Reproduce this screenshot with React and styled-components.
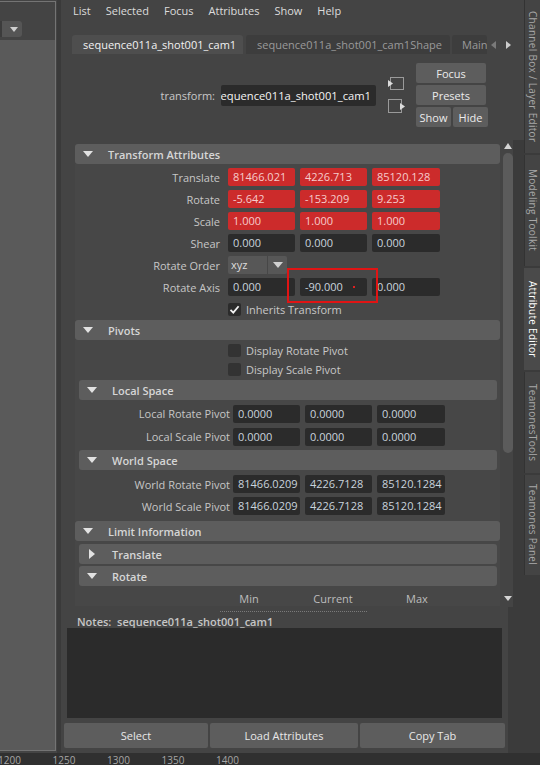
import React from "react"
import styled, { createGlobalStyle } from "styled-components"

const GlobalStyle = createGlobalStyle`
  html, body {
    margin: 0;
    padding: 0;
    background: #444444;
  }
  body {
    font-family: "Open Sans", "Noto Sans", sans-serif;
    font-size: 11px;
    color: #c8c8c8;
  }
  * { box-sizing: border-box; }
`

const Page = styled.div`
  width: 540px;
  height: 765px;
  overflow: hidden;
  display: grid;
  grid-template-columns: 56px 6px 462px 16px;
  grid-template-rows: 753px 12px;
  background: #444444;
`

/* ---------- left pane ---------- */

const LeftPane = styled.div`
  margin-top: 1px;
  height: 750px;
  display: flex;
  flex-direction: column;
  border: 1px solid #747474;
  border-left: none;
`

const LeftTop = styled.div`
  height: 38px;
  padding-top: 19px;
  background: #444444;
`

const DropButton = styled.div`
  width: 22px;
  height: 16px;
  display: flex;
  align-items: center;
  justify-content: center;
  padding-left: 3px;
  background: #555555;
  border-left: 2px solid #3c3c3c;
  border-radius: 0 3px 3px 0;
`

const LeftBody = styled.div`
  flex: 1;
  background: #5a5a5a;
`

const Gutter = styled.div`
  background: #3a3a3a;
  border-left: 1px solid #444444;
  border-right: 1px solid #444444;
`

/* ---------- main column ---------- */

const Main = styled.div`
  display: flex;
  flex-direction: column;
  background: #3b3b3b;
  min-width: 0;
`

const MenuBar = styled.div`
  height: 20px;
  display: flex;
  align-items: center;
  gap: 15px;
  padding-left: 11px;
  background: #444444;
  color: #dcdcdc;
`

const TopGap = styled.div`
  height: 15px;
  background: #444444;
`

const TabBar = styled.div`
  height: 19px;
  display: flex;
  padding-left: 10px;
  background: #444444;
`

const Tab = styled.div`
  width: ${p => p.$w}px;
  flex: none;
  margin-right: ${p => p.$mr ?? 3}px;
  padding-left: ${p => p.$pl ?? 11}px;
  line-height: 19px;
  white-space: nowrap;
  overflow: hidden;
  border-radius: 3px 3px 0 0;
  background: ${p => (p.$active ? "#4e4e4e" : "#3d3d3d")};
  color: ${p => (p.$active ? "#f2f2f2" : "#9a9a9a")};
`

const TabArrows = styled.div`
  display: flex;
  align-items: center;
  gap: 10px;
  padding-left: 4px;
`

const TriLeft = styled.span`
  width: 0;
  height: 0;
  border-top: 4px solid transparent;
  border-bottom: 4px solid transparent;
  border-right: 5px solid ${p => p.$c || "#7a7a7a"};
`

const TriRight = styled.span`
  width: 0;
  height: 0;
  border-top: ${p => p.$s || 4}px solid transparent;
  border-bottom: ${p => p.$s || 4}px solid transparent;
  border-left: ${p => (p.$s || 4) + 1}px solid ${p => p.$c || "#cccccc"};
`

const TriDown = styled.span`
  width: 0;
  height: 0;
  border-left: ${p => p.$s || 5}px solid transparent;
  border-right: ${p => p.$s || 5}px solid transparent;
  border-top: ${p => (p.$s || 5) + 1}px solid ${p => p.$c || "#e2e2e2"};
`

const TriUp = styled.span`
  width: 0;
  height: 0;
  border-left: 4px solid transparent;
  border-right: 4px solid transparent;
  border-bottom: 6px solid #d4d4d4;
`

const HeaderArea = styled.div`
  height: 86px;
  display: flex;
  align-items: center;
  justify-content: flex-end;
  padding: 0 36px 4px 0;
  background: #444444;
`

const FieldLabel = styled.div`
  margin-right: 6px;
  color: #c8c8c8;
`

const NameInput = styled.div`
  width: 155px;
  height: 21px;
  display: flex;
  align-items: center;
  justify-content: flex-end;
  padding-right: 5px;
  overflow: hidden;
  white-space: nowrap;
  border-radius: 2px;
  background: #2b2b2b;
  color: #f4f4f4;
  font-size: 11.2px;
`

const IconStack = styled.div`
  width: 17px;
  margin-left: 12px;
  display: flex;
  flex-direction: column;
  gap: 8px;
`

const ButtonStack = styled.div`
  width: 72px;
  margin-left: 11px;
  display: flex;
  flex-direction: column;
  gap: 2px;
`

const ButtonPair = styled.div`
  display: flex;
  gap: 2px;
`

const SmallButton = styled.div`
  width: ${p => p.$w}px;
  height: 20px;
  display: flex;
  align-items: center;
  justify-content: center;
  border-radius: 2px;
  background: #5d5d5d;
  color: #ececec;
`

/* ---------- scroll area ---------- */

const ScrollArea = styled.div`
  height: 467px;
  display: flex;
  overflow: hidden;
`

const Sections = styled.div`
  flex: 1;
  display: flex;
  flex-direction: column;
  padding: 4px 2px 0 13px;
  background: #444444;
  overflow: hidden;
`

const ScrollTrack = styled.div`
  width: 11px;
  display: flex;
  flex-direction: column;
  align-items: center;
  background: #444444;
`

const ScrollUp = styled(TriUp)`
  margin-top: 3px;
`

const ScrollThumb = styled.div`
  margin-top: 4px;
  width: 10px;
  height: 300px;
  border-radius: 5px;
  background: #5b5b5b;
`

const ScrollDown = styled(TriDown)`
  margin-top: auto;
  margin-bottom: 6px;
`

const ScrollGutter = styled.div`
  width: 11px;
  background: #3b3b3b;
`

const SectionWrap = styled.div`
  display: flex;
  flex-direction: column;
  flex: none;
  margin: ${p => p.$mt || 0}px ${p => (p.$nested ? 3 : 0)}px 0 ${p => (p.$nested ? 4 : 0)}px;
`

const SectionHeader = styled.div`
  height: 20px;
  display: flex;
  align-items: center;
  padding-left: 7px;
  border-radius: 3px;
  background: #5d5d5d;
  color: #d6d6d6;
  font-weight: 600;
`

const ArrowBox = styled.span`
  width: 11px;
  margin-right: 15px;
  display: flex;
  align-items: center;
  justify-content: center;
`

const SectionBody = styled.div`
  display: flex;
  flex-direction: column;
  padding: ${p => p.$pt || 0}px 0 ${p => p.$pb || 0}px;
  background: ${p => (p.$nested ? "transparent" : "#474747")};
`

const Row = styled.div`
  position: relative;
  display: flex;
  align-items: center;
  height: ${p => p.$h || 22}px;
`

const Label = styled.div`
  width: ${p => p.$w}px;
  margin-right: ${p => p.$gap}px;
  flex: none;
  text-align: right;
  white-space: nowrap;
  color: #c6c6c6;
`

const Fields = styled.div`
  display: flex;
  gap: 5px;
`

const Field = styled.div`
  position: relative;
  width: ${p => p.$w || 67}px;
  height: 18px;
  line-height: 18px;
  padding-left: 5px;
  overflow: hidden;
  white-space: nowrap;
  border-radius: 2px;
  background: ${p => (p.$keyed ? "#cc2b2b" : "#2b2b2b")};
  color: ${p => (p.$keyed ? "#f6cccc" : "#c9d3dd")};
`

const RedDot = styled.span`
  position: absolute;
  left: 53px;
  top: 8px;
  width: 2px;
  height: 2px;
  background: #e02020;
`

const Annotation = styled.div`
  position: absolute;
  left: 212px;
  top: -8px;
  width: 91px;
  height: 35px;
  border: 2px solid #e01414;
  pointer-events: none;
`

const Dropdown = styled.div`
  width: 59px;
  height: 18px;
  display: flex;
  gap: 1px;
  border-radius: 2px;
  overflow: hidden;
`

const DropValue = styled.div`
  flex: 1;
  padding-left: 3px;
  line-height: 18px;
  background: #575757;
  color: #dddddd;
`

const DropArrow = styled.div`
  width: 19px;
  display: flex;
  align-items: center;
  justify-content: center;
  background: #575757;
`

const CheckBox = styled.div`
  width: 13px;
  height: 13px;
  margin-right: 5px;
  display: flex;
  align-items: center;
  justify-content: center;
  border-radius: 2px;
  background: ${p => (p.$checked ? "#2b2b2b" : "#333333")};
`

const CheckText = styled.span`
  color: #c8c8c8;
`

const LimitHead = styled.div`
  height: 16px;
  display: grid;
  grid-template-columns: 84px 84px 84px;
  padding-left: 128px;
  align-items: center;
  color: #bdbdbd;
  text-align: center;
`

/* ---------- notes ---------- */

const NotesPanel = styled.div`
  flex: 1;
  margin-right: 16px;
  display: flex;
  flex-direction: column;
  background: #444444;
`

const SplitHandle = styled.div`
  width: 147px;
  height: 0;
  margin: 4px 0 3px 158px;
  border-top: 1px dotted #7a7a7a;
`

const NotesLabel = styled.div`
  height: 13px;
  line-height: 13px;
  padding-left: 15px;
  white-space: pre;
  font-weight: 600;
  color: #c6c6c6;
`

const NotesBox = styled.div`
  height: 90px;
  margin: 0 6px 0 5px;
  background: #2b2b2b;
`

const ButtonRow = styled.div`
  height: 25px;
  margin: 5px 3px 0 2px;
  display: grid;
  grid-template-columns: 144px 148px 1fr;
  gap: 2px;
`

const BigButton = styled.div`
  display: flex;
  align-items: center;
  justify-content: center;
  border-radius: 2px;
  background: #5d5d5d;
  color: #e8e8e8;
`

/* ---------- right sidebar ---------- */

const Sidebar = styled.div`
  display: flex;
  flex-direction: column;
  gap: 2px;
  background: #3b3b3b;
`

const SideTab = styled.div`
  height: ${p => p.$h}px;
  flex: none;
  display: flex;
  align-items: center;
  justify-content: center;
  writing-mode: vertical-rl;
  white-space: nowrap;
  font-size: 10px;
  letter-spacing: 0.3px;
  border-left: 1px solid ${p => (p.$active ? "#4a4a4a" : "#333333")};
  background: ${p => (p.$active ? "#4a4a4a" : "#444444")};
  color: ${p => (p.$active ? "#ffffff" : "#a8a8a8")};
`

/* ---------- timeline ---------- */

const Timeline = styled.div`
  grid-column: 1 / -1;
  display: flex;
  padding-top: 2px;
  margin-left: -2px;
  background: #303030;
  overflow: hidden;
`

const Tick = styled.span`
  width: 54.5px;
  flex: none;
  font-size: 10px;
  line-height: 11px;
  color: #a6a6a6;
`

/* ---------- icons ---------- */

const LoadIcon = () => (
  <svg width="18" height="14" viewBox="0 0 18 14">
    <rect x="2.5" y="0.5" width="13" height="12" fill="none" stroke="#9a9a9a" />
    <polygon points="0,3 5,6.5 0,10" fill="#dcdcdc" />
  </svg>
)

const ExportIcon = () => (
  <svg width="18" height="15" viewBox="0 0 18 15">
    <rect x="0.5" y="0.5" width="13" height="13" fill="none" stroke="#9a9a9a" />
    <polygon points="12,4 17,7.5 12,11" fill="#dcdcdc" />
  </svg>
)

const CheckMark = () => (
  <svg width="11" height="11" viewBox="0 0 11 11">
    <path d="M1.5 5.8 L4.3 8.6 L9.6 2.2" fill="none" stroke="#f2f2f2" strokeWidth="1.8" />
  </svg>
)

/* ---------- data ---------- */

const transformRows = [
  { label: "Translate", values: ["81466.021", "4226.713", "85120.128"], keyed: true },
  { label: "Rotate", values: ["-5.642", "-153.209", "9.253"], keyed: true },
  { label: "Scale", values: ["1.000", "1.000", "1.000"], keyed: true },
  { label: "Shear", values: ["0.000", "0.000", "0.000"] },
]

const localRows = [
  { label: "Local Rotate Pivot", values: ["0.0000", "0.0000", "0.0000"] },
  { label: "Local Scale Pivot", values: ["0.0000", "0.0000", "0.0000"] },
]

const worldRows = [
  { label: "World Rotate Pivot", values: ["81466.0209", "4226.7128", "85120.1284"] },
  { label: "World Scale Pivot", values: ["81466.0209", "4226.7128", "85120.1284"] },
]

const sideTabs = [
  { label: "Channel Box / Layer Editor", h: 153 },
  { label: "Modeling Toolkit", h: 111 },
  { label: "Attribute Editor", h: 102, active: true },
  { label: "TeamonesTools", h: 101 },
  { label: "Teamones Panel", h: 100 },
]

const Section = ({ title, nested, open = true, mt, children }) => (
  <SectionWrap $nested={nested} $mt={mt}>
    <SectionHeader>
      <ArrowBox>{open ? <TriDown /> : <TriRight $s={5} $c="#e2e2e2" />}</ArrowBox>
      {title}
    </SectionHeader>
    {children}
  </SectionWrap>
)

const VectorRow = ({ label, values, keyed, w, gap, h }) => (
  <Row $h={h}>
    <Label $w={w} $gap={gap}>{label}</Label>
    <Fields>
      {values.map((v, i) => (
        <Field key={i} $keyed={keyed} $w={i === 2 ? 68 : 67}>{v}</Field>
      ))}
    </Fields>
  </Row>
)

export default function App() {
  return (
    <>
      <GlobalStyle />
      <Page>
        <LeftPane>
          <LeftTop>
            <DropButton>
              <TriDown $s={4} $c="#cfcfcf" />
            </DropButton>
          </LeftTop>
          <LeftBody />
        </LeftPane>

        <Gutter />

        <Main>
          <MenuBar>
            {["List", "Selected", "Focus", "Attributes", "Show", "Help"].map(m => (
              <span key={m}>{m}</span>
            ))}
          </MenuBar>
          <TopGap />
          <TabBar>
            <Tab $w={171} $active>sequence011a_shot001_cam1</Tab>
            <Tab $w={204} $mr={2}>sequence011a_shot001_cam1Shape</Tab>
            <Tab $w={35} $mr={0} $pl={10}>Main</Tab>
            <TabArrows>
              <TriLeft />
              <TriRight />
            </TabArrows>
          </TabBar>

          <HeaderArea>
            <FieldLabel>transform:</FieldLabel>
            <NameInput>sequence011a_shot001_cam1</NameInput>
            <IconStack>
              <LoadIcon />
              <ExportIcon />
            </IconStack>
            <ButtonStack>
              <SmallButton $w={70}>Focus</SmallButton>
              <SmallButton $w={70}>Presets</SmallButton>
              <ButtonPair>
                <SmallButton $w={35}>Show</SmallButton>
                <SmallButton $w={35}>Hide</SmallButton>
              </ButtonPair>
            </ButtonStack>
          </HeaderArea>

          <ScrollArea>
            <Sections>
              <Section title="Transform Attributes">
                <SectionBody $pt={2}>
                  {transformRows.map(r => (
                    <VectorRow key={r.label} {...r} w={145} gap={8} />
                  ))}
                  <Row>
                    <Label $w={145} $gap={8}>Rotate Order</Label>
                    <Dropdown>
                      <DropValue>xyz</DropValue>
                      <DropArrow>
                        <TriDown $s={5} $c="#d0d0d0" />
                      </DropArrow>
                    </Dropdown>
                  </Row>
                  <Row>
                    <Label $w={145} $gap={8}>Rotate Axis</Label>
                    <Fields>
                      <Field>0.000</Field>
                      <Field>-90.000<RedDot /></Field>
                      <Field $w={68}>0.000</Field>
                    </Fields>
                    <Annotation />
                  </Row>
                  <Row>
                    <Label $w={145} $gap={8} />
                    <CheckBox $checked><CheckMark /></CheckBox>
                    <CheckText>Inherits Transform</CheckText>
                  </Row>
                </SectionBody>
              </Section>

              <Section title="Pivots">
                <SectionBody $pt={1} $pb={4}>
                  <Row $h={19}>
                    <Label $w={145} $gap={8} />
                    <CheckBox />
                    <CheckText>Display Rotate Pivot</CheckText>
                  </Row>
                  <Row $h={19}>
                    <Label $w={145} $gap={8} />
                    <CheckBox />
                    <CheckText>Display Scale Pivot</CheckText>
                  </Row>
                  <Section title="Local Space" nested mt={1}>
                    <SectionBody $nested $pt={2}>
                      {localRows.map(r => (
                        <VectorRow key={r.label} {...r} w={151} gap={3} h={23} />
                      ))}
                    </SectionBody>
                  </Section>
                  <Section title="World Space" nested mt={2}>
                    <SectionBody $nested $pt={3}>
                      {worldRows.map(r => (
                        <VectorRow key={r.label} {...r} w={151} gap={3} />
                      ))}
                    </SectionBody>
                  </Section>
                </SectionBody>
              </Section>

              <Section title="Limit Information">
                <SectionBody $pt={3}>
                  <Section title="Translate" nested open={false} />
                  <Section title="Rotate" nested mt={2}>
                    <SectionBody $nested $pt={4}>
                      <LimitHead>
                        <span>Min</span>
                        <span>Current</span>
                        <span>Max</span>
                      </LimitHead>
                    </SectionBody>
                  </Section>
                </SectionBody>
              </Section>
            </Sections>
            <ScrollTrack>
              <ScrollUp />
              <ScrollThumb />
              <ScrollDown $s={4} $c="#d4d4d4" />
            </ScrollTrack>
            <ScrollGutter />
          </ScrollArea>

          <NotesPanel>
            <SplitHandle />
            <NotesLabel>Notes:  sequence011a_shot001_cam1</NotesLabel>
            <NotesBox />
            <ButtonRow>
              <BigButton>Select</BigButton>
              <BigButton>Load Attributes</BigButton>
              <BigButton>Copy Tab</BigButton>
            </ButtonRow>
          </NotesPanel>
        </Main>

        <Sidebar>
          {sideTabs.map(t => (
            <SideTab key={t.label} $h={t.h} $active={t.active}>{t.label}</SideTab>
          ))}
        </Sidebar>

        <Timeline>
          {["1200", "1250", "1300", "1350", "1400"].map(n => (
            <Tick key={n}>{n}</Tick>
          ))}
        </Timeline>
      </Page>
    </>
  )
}
